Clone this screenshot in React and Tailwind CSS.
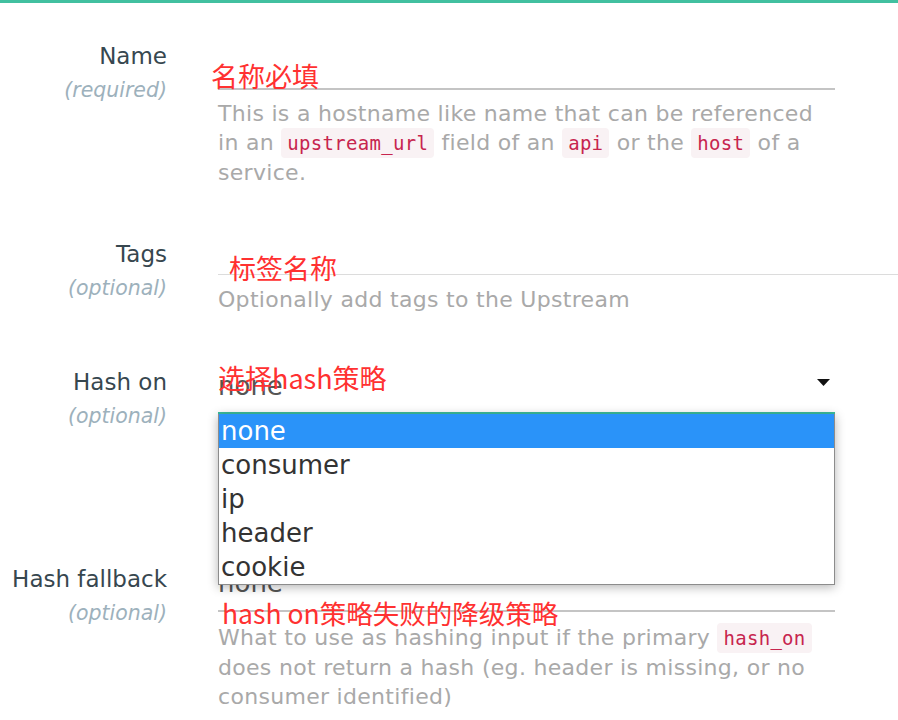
import React from 'react';

const sans = "font-['DejaVu_Sans',sans-serif]";
const cjk = "font-['Noto_Sans_CJK_SC',sans-serif]";

function Code({ children }) {
  return (
    <code className="rounded-[4px] bg-[#f9f2f4] px-[6px] py-[4px] font-['DejaVu_Sans_Mono',monospace] text-[19px] text-[#c7254e]">
      {children}
    </code>
  );
}

function Row({ label, hint, className, children }) {
  return (
    <div className={className}>
      <div className="flex">
        <div className="w-[167px] shrink-0 text-right">
          <div className="text-[23px] leading-[34px] text-[#37474f]">{label}</div>
          <div className="text-[20.5px] leading-[34px] italic text-[#9db1bc]">{hint}</div>
        </div>
        <div className="relative ml-[51px] w-[617px]">{children}</div>
      </div>
    </div>
  );
}

function Help({ className, children }) {
  return (
    <p className={className + " text-[22px] leading-[29px] tracking-[0.3px] text-[#a9a9a9] whitespace-nowrap"}>
      {children}
    </p>
  );
}

function Note({ className, children }) {
  return <span className={cjk + " absolute leading-[30px] text-[#ff3131] whitespace-nowrap " + className}>{children}</span>;
}

function Arrow() {
  return (
    <svg width="13" height="7" viewBox="0 0 13 7" className="mt-[8px] mr-[5px]">
      <polygon points="0,0 13,0 6.5,7" fill="#111" />
    </svg>
  );
}

const options = ['none', 'consumer', 'ip', 'header', 'cookie'];

export default function App() {
  return (
    <div className={sans + " min-h-[720px] w-[898px] overflow-hidden bg-white"}>
      <div className="h-[3px] bg-[#41c0a0]" />

      <Row label="Name" hint="(required)" className="pt-[36px]">
        <div className="h-[51px] border-b-2 border-[#c4c4c4]" />
        <Note className="left-[-7px] top-[22px] text-[27px]">名称必填</Note>
        <Help className="mt-[9px]">
          This is a hostname like name that can be referenced
          <br />
          in an <Code>upstream_url</Code> field of an <Code>api</Code> or the <Code>host</Code> of a
          <br />
          service.
        </Help>
      </Row>

      <Row label="Tags" hint="(optional)" className="mt-[50px]">
        <div className="h-[38px] w-[700px] border-b border-[#dcdcdc]" />
        <Note className="left-[11px] top-[16px] text-[27px]">标签名称</Note>
        <Help className="mt-[10px]">Optionally add tags to the Upstream</Help>
      </Row>

      <Row label="Hash on" hint="(optional)" className="mt-[51px]">
        <div className="flex h-[49px] items-start justify-between border-b-2 border-[#3dbd9c] pt-[6px]">
          <span className="text-[26px] leading-[30px] text-[#555]">none</span>
          <Arrow />
        </div>
        <Note className="left-0 top-[-2px] text-[27px]">选择hash策略</Note>
        <div className="h-[98px]" />
        <ul className="absolute left-0 top-[49px] z-20 w-[617px] border border-t-0 border-[#8c8c8c] bg-white shadow-[0_2px_10px_rgba(0,0,0,0.3)]">
          {options.map((o, i) => (
            <li
              key={o}
              className={
                i === 0
                  ? 'h-[34px] bg-[#2a93f9] pl-[2px] text-[26px] leading-[34px] text-white'
                  : 'h-[34px] pl-[2px] text-[26px] leading-[34px] text-[#333]'
              }
            >
              {o}
            </li>
          ))}
        </ul>
      </Row>

      <Row label="Hash fallback" hint="(optional)" className="mt-[50px]">
        <div className="h-[50px] border-b-2 border-[#c4c4c4] pt-[6px]">
          <span className="block text-[26px] leading-[30px] text-[#555]">none</span>
        </div>
        <Note className="left-[4px] top-[36px] text-[26.5px]">hash on策略失败的降级策略</Note>
        <Help className="mt-[11px]">
          What to use as hashing input if the primary <Code>hash_on</Code>
          <br />
          does not return a hash (eg. header is missing, or no
          <br />
          consumer identified)
        </Help>
      </Row>
    </div>
  );
}
